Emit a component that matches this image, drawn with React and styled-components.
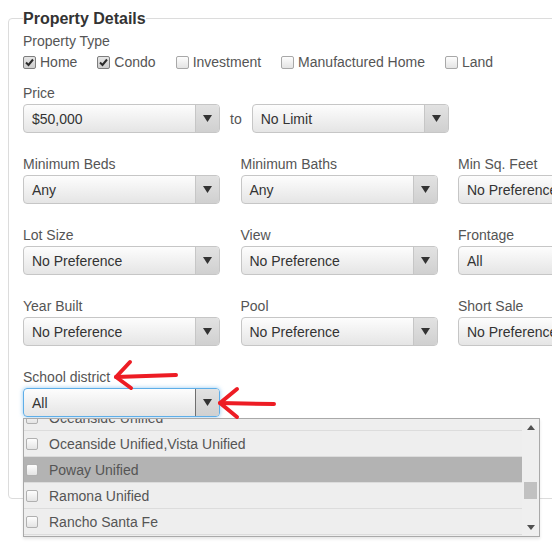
import React from "react";
import styled, { createGlobalStyle } from "styled-components";

const GlobalStyle = createGlobalStyle`
  html, body { margin: 0; padding: 0; background: #fff; overflow: hidden; }
  body { font-family: "Liberation Sans", Arial, sans-serif; font-size: 14px; color: #555; }
  * { box-sizing: border-box; }
`;

const Page = styled.div`
  position: relative;
  width: 552px;
  height: 548px;
  overflow: hidden;
  padding: 10px 0 0 8px;
`;

const Fieldset = styled.fieldset`
  margin: 0;
  width: 720px;
  min-width: 0;
  border: 1px solid #dcdcdc;
  border-radius: 4px;
  padding: 5px 14px 81px 14px;
`;

const Legend = styled.legend`
  padding: 0;
  margin: 0;
  font-size: 16px;
  line-height: 17px;
  font-weight: bold;
  color: #333;
`;

const Group = styled.div`
  position: relative;
  margin-bottom: ${(p) => p.$mb || 0}px;
`;

const Label = styled.label`
  display: block;
  line-height: 18px;
  margin-bottom: 2px;
  color: #555;
`;

const CheckRow = styled.div`
  display: flex;
  gap: 20px;
  line-height: 20px;
`;

const CheckItem = styled.span`
  display: inline-flex;
  align-items: center;
  gap: 4px;
  white-space: nowrap;
`;

const Box = styled.span`
  width: 13px;
  height: 13px;
  flex: none;
  border: 1px solid ${(p) => (p.$checked ? "#7d7d7d" : "#a8a8a8")};
  border-radius: 2px;
  background: ${(p) =>
    p.$checked
      ? "linear-gradient(#e6e6e6, #cdcdcd)"
      : "linear-gradient(#fdfdfd, #e4e4e4)"};
  display: inline-flex;
  align-items: center;
  justify-content: center;
`;

const SmallBox = styled(Box)`
  width: 12px;
  height: 12px;
  border-color: #b0b0b0;
`;

const PriceRow = styled.div`
  display: flex;
  align-items: center;
`;

const To = styled.span`
  margin: 0 10px;
  color: #555;
`;

const Grid = styled.div`
  display: grid;
  grid-template-columns: repeat(3, 197px);
  column-gap: 20.5px;
  row-gap: 22px;
  margin-bottom: 22px;
`;

const SelectWrap = styled.div`
  position: relative;
  width: 197px;
`;

const SelectBox = styled.div`
  width: 197px;
  height: 29px;
  display: flex;
  border: 1px solid ${(p) => (p.$focused ? "#5eaee8" : "#c6c6c6")};
  border-radius: 4px;
  background: linear-gradient(#fdfdfd, #e5e5e5);
  box-shadow: ${(p) => (p.$focused ? "0 0 4px rgba(94,174,232,0.65)" : "none")};
  overflow: hidden;
`;

const SelectValue = styled.span`
  flex: 1;
  padding-left: 8px;
  line-height: 29px;
  color: #333;
  white-space: nowrap;
  overflow: hidden;
`;

const SelectButton = styled.span`
  width: 24px;
  flex: none;
  border-left: 1px solid ${(p) => (p.$focused ? "#6f6f6f" : "#c6c6c6")};
  background: linear-gradient(#e2e2e2, #d0d0d0);
  display: flex;
  align-items: center;
  justify-content: center;
`;

const Dropdown = styled.div`
  position: absolute;
  top: calc(100% + 1px);
  left: 0;
  width: 517px;
  height: 119px;
  border: 1px solid #a9a9a9;
  background: #eee;
  display: flex;
  z-index: 5;
  box-shadow: 0 2px 3px rgba(0, 0, 0, 0.1);
`;

const OptionViewport = styled.div`
  flex: 1;
  overflow: hidden;
`;

const OptionList = styled.ul`
  list-style: none;
  margin: -14px 0 0;
  padding: 0;
`;

const OptionItem = styled.li`
  height: 26px;
  display: flex;
  align-items: center;
  gap: 11px;
  padding-left: 2px;
  border-bottom: 1px solid #dcdcdc;
  background: ${(p) => (p.$active ? "#b3b3b3" : "transparent")};
  color: #555;
  white-space: nowrap;
`;

const Scrollbar = styled.div`
  width: 17px;
  flex: none;
  display: flex;
  flex-direction: column;
  background: #efefef;
`;

const ScrollBtn = styled.div`
  height: 17px;
  display: flex;
  align-items: center;
  justify-content: center;
`;

const Track = styled.div`
  flex: 1;
`;

const Thumb = styled.div`
  width: 13px;
  height: 17px;
  margin: ${(p) => p.$offset}px auto 0;
  background: #c1c1c1;
`;

const Overlay = styled.svg`
  position: absolute;
  top: 0;
  left: 0;
  pointer-events: none;
  z-index: 10;
`;

const Caret = () => (
  <svg width="9" height="7" viewBox="0 0 9 7">
    <polygon points="0,0 9,0 4.5,7" fill="#333" />
  </svg>
);

const Check = () => (
  <svg width="11" height="11" viewBox="0 0 11 11">
    <path d="M2 5.5 L4.5 8 L9 2.5" fill="none" stroke="#2b2b2b" strokeWidth="2" />
  </svg>
);

const Select = ({ value, focused, children }) => (
  <SelectWrap>
    <SelectBox $focused={focused}>
      <SelectValue>{value}</SelectValue>
      <SelectButton $focused={focused}>
        <Caret />
      </SelectButton>
    </SelectBox>
    {children}
  </SelectWrap>
);

const types = [
  { label: "Home", checked: true },
  { label: "Condo", checked: true },
  { label: "Investment" },
  { label: "Manufactured Home" },
  { label: "Land" },
];

const fields = [
  ["Minimum Beds", "Any"],
  ["Minimum Baths", "Any"],
  ["Min Sq. Feet", "No Preference"],
  ["Lot Size", "No Preference"],
  ["View", "No Preference"],
  ["Frontage", "All"],
  ["Year Built", "No Preference"],
  ["Pool", "No Preference"],
  ["Short Sale", "No Preference"],
];

const districts = [
  "Oceanside Unified",
  "Oceanside Unified,Vista Unified",
  "Poway Unified",
  "Ramona Unified",
  "Rancho Santa Fe",
  "San Diego Unified",
];

export default function App() {
  return (
    <>
      <GlobalStyle />
      <Page>
        <Fieldset>
          <Legend>Property Details</Legend>
          <Group $mb={12}>
            <Label>Property Type</Label>
            <CheckRow>
              {types.map((t) => (
                <CheckItem key={t.label}>
                  <Box $checked={t.checked}>{t.checked && <Check />}</Box>
                  {t.label}
                </CheckItem>
              ))}
            </CheckRow>
          </Group>
          <Group $mb={22}>
            <Label>Price</Label>
            <PriceRow>
              <Select value="$50,000" />
              <To>to</To>
              <Select value="No Limit" />
            </PriceRow>
          </Group>
          <Grid>
            {fields.map(([label, value]) => (
              <Group key={label}>
                <Label>{label}</Label>
                <Select value={value} />
              </Group>
            ))}
          </Grid>
          <Group>
            <Label>School district</Label>
            <Select value="All" focused>
              <Dropdown>
                <OptionViewport>
                  <OptionList>
                    {districts.map((d) => (
                      <OptionItem key={d} $active={d === "Poway Unified"}>
                        <SmallBox />
                        {d}
                      </OptionItem>
                    ))}
                  </OptionList>
                </OptionViewport>
                <Scrollbar>
                  <ScrollBtn>
                    <svg width="8" height="5" viewBox="0 0 8 5">
                      <polygon points="0,5 8,5 4,0" fill="#505050" />
                    </svg>
                  </ScrollBtn>
                  <Track>
                    <Thumb $offset={46} />
                  </Track>
                  <ScrollBtn>
                    <svg width="8" height="5" viewBox="0 0 8 5">
                      <polygon points="0,0 8,0 4,5" fill="#505050" />
                    </svg>
                  </ScrollBtn>
                </Scrollbar>
              </Dropdown>
            </Select>
          </Group>
        </Fieldset>
        <Overlay width="552" height="548" viewBox="0 0 552 548">
          <g fill="none" stroke="#ed1c24" strokeWidth="4" strokeLinecap="round" strokeLinejoin="round">
            <path d="M176 375 L116 377" />
            <path d="M130 362 L116 377 L131 388" />
            <path d="M274 404 L220 403" />
            <path d="M237 389 L220 403 L237 417" />
          </g>
        </Overlay>
      </Page>
    </>
  );
}
